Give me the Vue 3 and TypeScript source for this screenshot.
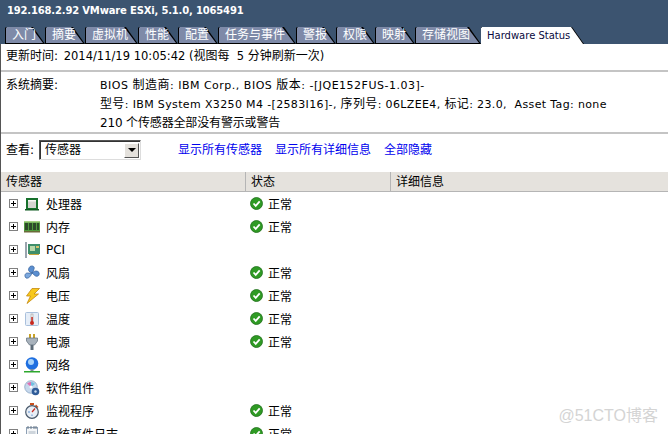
<script setup lang="ts">
interface Tab {
  label: string
  width: number
  active?: boolean
}

interface SensorRow {
  name: string
  icon: string
  ok: boolean
}

const tabs: Tab[] = [
  { label: '入门', width: 40 },
  { label: '摘要', width: 40 },
  { label: '虚拟机', width: 53 },
  { label: '性能', width: 40 },
  { label: '配置', width: 40 },
  { label: '任务与事件', width: 78 },
  { label: '警报', width: 40 },
  { label: '权限', width: 39 },
  { label: '映射', width: 40 },
  { label: '存储视图', width: 66 },
  { label: 'Hardware Status', width: 103, active: true },
]

const rows: SensorRow[] = [
  { name: '处理器', icon: 'cpu', ok: true },
  { name: '内存', icon: 'memory', ok: true },
  { name: 'PCI', icon: 'pci', ok: false },
  { name: '风扇', icon: 'fan', ok: true },
  { name: '电压', icon: 'bolt', ok: true },
  { name: '温度', icon: 'temp', ok: true },
  { name: '电源', icon: 'plug', ok: true },
  { name: '网络', icon: 'net', ok: false },
  { name: '软件组件', icon: 'soft', ok: false },
  { name: '监视程序', icon: 'watch', ok: true },
  { name: '系统事件日志', icon: 'log', ok: true },
]
</script>

<template>
  <div class="page">
    <header class="top">
      <div class="top__title">192.168.2.92 VMware ESXi, 5.1.0, 1065491</div>
      <nav class="tabs">
        <div
          v-for="tab in tabs"
          :key="tab.label"
          class="tab"
          :class="{ 'is-active': tab.active }"
          :style="{ width: tab.width + 'px' }"
        >
          <span class="tab__text">{{ tab.label }}</span>
        </div>
      </nav>
    </header>

    <main class="body">
      <div class="updated"><span class="zh updated__label">更新时间:</span> 2014/11/19 10:05:42 (<span class="zh">视图每</span>&nbsp; 5 <span class="zh">分钟刷新一次</span>)</div>

      <section class="summary">
        <div class="summary__label">系统摘要:</div>
        <div class="summary__text">
          <div class="line-a">BIOS <span class="zh">制造商</span>: IBM Corp., BIOS <span class="zh">版本</span>: -[JQE152FUS-1.03]-</div>
          <div class="line-b"><span class="zh">型号</span>: IBM System X3250 M4 -[2583I16]-, <span class="zh">序列号</span>: 06LZEE4, <span class="zh">标记</span>: 23.0,&nbsp; Asset Tag: none</div>
          <div class="line-c">210 个传感器全部没有警示或警告</div>
        </div>
      </section>

      <section class="view">
        <span class="view__label">查看:</span>
        <div class="select">
          <span class="select__value">传感器</span>
          <span class="select__btn"><i class="select__arrow"></i></span>
        </div>
        <div class="links">
          <a>显示所有传感器</a>
          <a>显示所有详细信息</a>
          <a>全部隐藏</a>
        </div>
      </section>

      <div class="thead">
        <div class="th">传感器</div>
        <div class="th">状态</div>
        <div class="th">详细信息</div>
      </div>

      <div v-for="row in rows" :key="row.name" class="tr">
        <div class="cell-name">
          <span class="expander"></span>
          <svg class="icon" viewBox="0 0 16 16" width="16" height="16">
            <template v-if="row.icon === 'cpu'">
              <rect x="2" y="2" width="12" height="12" fill="#17702c" />
              <rect x="1" y="13" width="14" height="1.500" fill="#0f5a20" />
              <rect x="4" y="4" width="8" height="8" fill="#d4d4d0" />
              <rect x="4" y="4" width="8" height="1.500" fill="#f6f6f4" />
            </template>
            <template v-else-if="row.icon === 'memory'">
              <rect x="0" y="2" width="16" height="11" fill="#4f9a3c" />
              <rect x="0" y="2" width="16" height="1.500" fill="#a5d084" />
              <rect x="1" y="4" width="3" height="7" fill="#2c4a2a" />
              <rect x="5" y="4" width="3" height="7" fill="#2c4a2a" />
              <rect x="9" y="4" width="3" height="7" fill="#2c4a2a" />
              <rect x="13" y="4" width="2" height="7" fill="#2c4a2a" />
              <rect x="0" y="12" width="16" height="1.500" fill="#6b6b3a" />
            </template>
            <template v-else-if="row.icon === 'pci'">
              <path d="M1 0h2v16H1z" fill="#9aa4ae" />
              <rect x="4" y="2" width="12" height="10" fill="#3f8f6a" />
              <rect x="6" y="4" width="5" height="5" fill="#b9d8a8" />
              <rect x="12" y="4" width="3" height="2" fill="#d6c46a" />
              <rect x="5" y="12" width="10" height="1" fill="#c7a63c" />
            </template>
            <template v-else-if="row.icon === 'fan'">
              <path d="M8 8C5 7 3 5 6 1.500c3-1.500 5 .5 4 2.500C9.500 5.500 9 7 8 8z" fill="#5b8fd0" stroke="#2f5c98" stroke-width=".7" />
              <path d="M8 8c2-2 5-3 7-.5 1 3-1.500 4.500-3.500 3.500C10 10 9 9 8 8z" fill="#5b8fd0" stroke="#2f5c98" stroke-width=".7" />
              <path d="M8 8c-1 2.500-3 6-6 5-2-2-1-5 1.500-5C5 8 7 8.500 8 8z" fill="#7da9de" stroke="#2f5c98" stroke-width=".7" />
            </template>
            <template v-else-if="row.icon === 'bolt'">
              <path d="M8 .5h7.500L10 6h4.500L3 15.500 6.500 8H2.500z" fill="#f7c81c" stroke="#c58a10" stroke-width=".8" />
            </template>
            <template v-else-if="row.icon === 'temp'">
              <rect x="1.500" y="1.500" width="13" height="13" rx="1" fill="#e6eef8" stroke="#a9c0dc" />
              <rect x="7" y="3" width="2" height="8" fill="#f4f4f4" stroke="#8c8c8c" stroke-width=".5" />
              <rect x="7.300" y="6" width="1.500" height="6" fill="#c8281e" />
              <circle cx="8" cy="12" r="2" fill="#c8281e" />
            </template>
            <template v-else-if="row.icon === 'plug'">
              <rect x="5" y="0" width="2" height="5" fill="#c9a227" />
              <rect x="9" y="0" width="2" height="5" fill="#c9a227" />
              <path d="M2.500 4h11v3l-3 4H5.500l-3-4z" fill="#a8b2bc" stroke="#5d6b78" stroke-width=".7" />
              <rect x="6.500" y="11" width="3" height="5" fill="#5d6b78" />
            </template>
            <template v-else-if="row.icon === 'net'">
              <circle cx="8" cy="6.500" r="6.300" fill="#1f6fe0" />
              <circle cx="7" cy="5" r="3" fill="#a9d4fa" />
              <rect x="6.500" y="12" width="3" height="2" fill="#7a8a98" />
              <rect x="0" y="14" width="16" height="1.500" fill="#2da82d" />
            </template>
            <template v-else-if="row.icon === 'soft'">
              <circle cx="7" cy="7" r="6.300" fill="#c6d8ec" stroke="#7f9cbc" stroke-width=".7" />
              <path d="M7 7 3 3.500A5 5 0 0 1 7 2z" fill="#e070b0" />
              <path d="M7 7V2a5 5 0 0 1 4 2z" fill="#70c0e0" />
              <circle cx="7" cy="7" r="1.500" fill="#fff" />
              <circle cx="11.500" cy="11.500" r="3.800" fill="#2f5c98" />
              <circle cx="11.500" cy="11.500" r="1.200" fill="#c6d8ec" />
            </template>
            <template v-else-if="row.icon === 'watch'">
              <rect x="6" y="0" width="4" height="2" fill="#c8501e" />
              <path d="M12 1.500l2.500 2.500-1.500 1-2-2z" fill="#c8501e" />
              <circle cx="8" cy="9" r="6.300" fill="#e8eef6" stroke="#48586a" stroke-width="1.200" />
              <path d="M8 9 11 5.500" stroke="#c8281e" stroke-width="1.200" />
              <path d="M4 9h2M8 13v-1.500" stroke="#5b8fd0" />
            </template>
            <template v-else>
              <rect x="2.500" y="1.500" width="11" height="13" fill="#f4f6f8" stroke="#8ea0b4" />
              <path d="M4 0v3M7 0v3M10 0v3M12 0v3" stroke="#687888" />
              <path d="M4.500 6h7M4.500 8h7M4.500 10h7M4.500 12h5" stroke="#a8b4c0" />
            </template>
          </svg>
          <span class="cell-name__text">{{ row.name }}</span>
        </div>
        <div class="cell-status">
          <template v-if="row.ok">
            <svg viewBox="0 0 13 13" width="13" height="13">
              <circle cx="6.500" cy="6.500" r="6" fill="#2f9a24" stroke="#1f6f1a" stroke-width=".8" />
              <path d="M3.500 6.500l2.200 2.300 4-4.500" fill="none" stroke="#fff" stroke-width="1.800" />
            </svg>
            <span>正常</span>
          </template>
        </div>
      </div>
    </main>

    <div class="watermark">@51CTO博客</div>
  </div>
</template>

<style>
html,
body {
  margin: 0;
  background: #fff;
  overflow: hidden;
}
</style>

<style scoped>
.page {
  position: relative;
  width: 668px;
  height: 434px;
  overflow: hidden;
  font-family: "DejaVu Sans", "Noto Sans CJK SC", sans-serif;
  font-size: 12px;
  color: #000;
}

.zh {
  font-size: 12px;
}

.top {
  height: 44px;
  background-color: #3c5470;
  display: flex;
  flex-direction: column;
  justify-content: space-between;
}

.top__title {
  padding: 3px 0 0 7px;
  height: 18px;
  line-height: 15px;
  font-size: 10px;
  font-weight: 700;
  letter-spacing: -0.17px;
  color: #fff;
}

.tabs {
  display: flex;
  padding-left: 5px;
  height: 17px;
}

.tab {
  position: relative;
  flex: none;
  height: 17px;
  box-sizing: border-box;
  background: #000;
  clip-path: polygon(0 1px, 1px 0, calc(100% - 12px) 0, 100% 100%, 0 100%);
}

.tab::before {
  content: "";
  position: absolute;
  inset: 0 2px 1px 1px;
  background: #7e8aa8;
  clip-path: polygon(0 1px, 1px 0, calc(100% - 12px) 0, 100% 100%, 0 100%);
}

.tab__text {
  position: relative;
  display: block;
  padding-left: 7px;
  line-height: 17px;
  color: #fff;
  white-space: nowrap;
}

.tab.is-active::before {
  inset: 0 1px 0 0;
  background: #fff;
}

.tab.is-active .tab__text {
  padding-left: 6px;
  font-size: 10px;
  color: #0a0a40;
}

.body {
  height: 390px;
  box-sizing: border-box;
  border-left: 1px solid #555;
}

.updated {
  height: 28px;
  box-sizing: border-box;
  padding: 4px 0 0 5px;
  line-height: 16px;
  font-size: 11.5px;
  white-space: nowrap;
  border-bottom: 2px solid #c4c4c4;
}

.updated__label {
  margin-right: 2px;
}

.summary {
  display: flex;
  height: 62px;
  box-sizing: border-box;
  padding: 4px 0 0 5px;
  border-bottom: 2px solid #c4c4c4;
  font-size: 11px;
}

.summary__label {
  width: 94px;
  flex: none;
  line-height: 19px;
  font-size: 12px;
}

.summary__text {
  line-height: 19px;
  white-space: nowrap;
}

.line-a {
  letter-spacing: 0.5px;
}

.line-b {
  letter-spacing: 0.36px;
}

.line-c {
  font-size: 12px;
  letter-spacing: -0.15px;
}

.view {
  display: flex;
  align-items: flex-start;
  height: 38px;
  box-sizing: border-box;
  padding: 6px 0 0 5px;
}

.view__label {
  width: 33px;
  line-height: 20px;
}

.select {
  display: flex;
  align-items: center;
  justify-content: space-between;
  width: 102px;
  height: 20px;
  box-sizing: border-box;
  border: 1px solid;
  border-color: #555 #ddd #ddd #555;
  box-shadow: inset 1px 1px 0 #333;
  padding: 0 1px 0 5px;
}

.select__value {
  line-height: 14px;
  margin-bottom: 1px;
}

.select__btn {
  width: 15px;
  height: 15px;
  box-sizing: border-box;
  display: flex;
  align-items: center;
  justify-content: center;
  background: #e4e1dc;
  border: 1px solid;
  border-color: #fff #555 #555 #fff;
}

.select__arrow {
  width: 0;
  height: 0;
  border: 4px solid transparent;
  border-top-color: #000;
  border-bottom: 0;
}

.links {
  display: flex;
  gap: 13px;
  margin-left: 37px;
  line-height: 20px;
  color: #0000ee;
}

.thead {
  display: grid;
  grid-template-columns: 245px 145px 1fr;
  height: 20px;
  box-sizing: border-box;
  background: #e5e2dd;
  border-bottom: 1px solid #b5b5b5;
}

.th {
  padding-left: 5px;
  line-height: 20px;
  border-right: 1px solid #b5b5b5;
}

.th:last-child {
  border-right: 0;
}

.tr {
  display: grid;
  grid-template-columns: 245px 1fr;
  height: 23px;
  align-items: center;
}

.cell-name {
  display: flex;
  align-items: center;
  padding-left: 8px;
}

.expander {
  position: relative;
  width: 9px;
  height: 9px;
  box-sizing: border-box;
  border: 1px solid #808080;
  margin-right: 6px;
  flex: none;
  background: linear-gradient(#000, #000) center / 5px 1px no-repeat,
    linear-gradient(#000, #000) center / 1px 5px no-repeat;
}

.icon {
  flex: none;
  margin-right: 6px;
}

.cell-name__text {
  font-size: 12px;
}

.cell-status {
  display: flex;
  align-items: center;
  gap: 5px;
  padding-left: 4px;
}

.watermark {
  position: absolute;
  right: 10px;
  bottom: 8px;
  font-family: "Liberation Sans", "Noto Sans CJK SC", sans-serif;
  font-size: 16px;
  line-height: 20px;
  color: #d4d4d4;
}
</style>
